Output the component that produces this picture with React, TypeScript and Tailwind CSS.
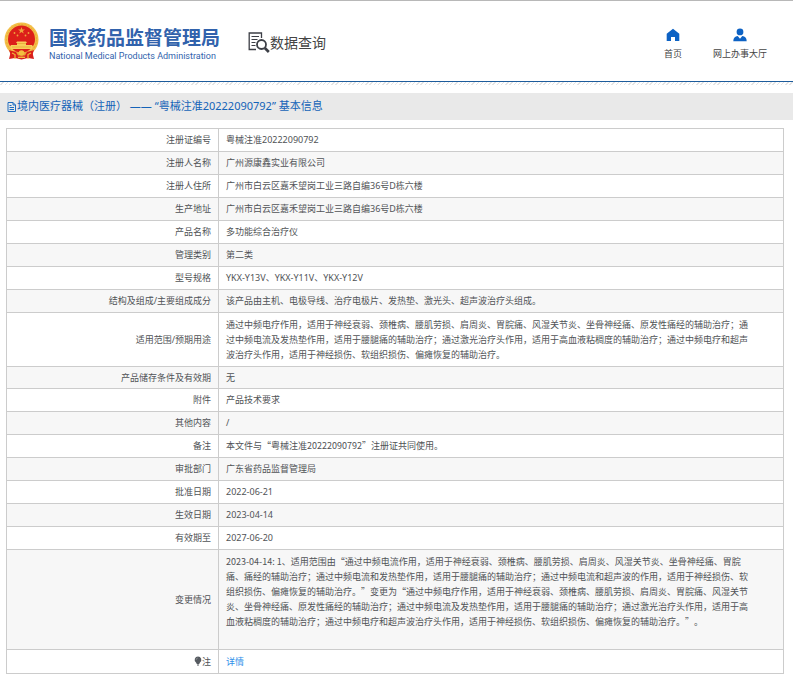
import React from 'react';
import clsx from 'clsx';

interface Row {
  label: string;
  value: string;
  height?: string;
}

const ROWS: Row[] = [
  { label: '注册证编号', value: '粤械注准20222090792' },
  { label: '注册人名称', value: '广州源康鑫实业有限公司' },
  { label: '注册人住所', value: '广州市白云区嘉禾望岗工业三路自编36号D栋六楼' },
  { label: '生产地址', value: '广州市白云区嘉禾望岗工业三路自编36号D栋六楼' },
  { label: '产品名称', value: '多功能综合治疗仪' },
  { label: '管理类别', value: '第二类' },
  { label: '型号规格', value: 'YKX-Y13V、YKX-Y11V、YKX-Y12V' },
  {
    label: '结构及组成/主要组成成分',
    value: '该产品由主机、电极导线、治疗电极片、发热垫、激光头、超声波治疗头组成。',
  },
  {
    label: '适用范围/预期用途',
    value:
      '通过中频电疗作用，适用于神经衰弱、颈椎病、腰肌劳损、肩周炎、胃脘痛、风湿关节炎、坐骨神经痛、原发性痛经的辅助治疗；通过中频电流及发热垫作用，适用于腰腿痛的辅助治疗；通过激光治疗头作用，适用于高血液粘稠度的辅助治疗；通过中频电疗和超声波治疗头作用，适用于神经损伤、软组织损伤、偏瘫恢复的辅助治疗。',
    height: 'h-[54px]',
  },
  { label: '产品储存条件及有效期', value: '无', height: 'h-[22px]' },
  { label: '附件', value: '产品技术要求' },
  { label: '其他内容', value: '/' },
  { label: '备注', value: '本文件与“粤械注准20222090792”注册证共同使用。' },
  { label: '审批部门', value: '广东省药品监督管理局' },
  { label: '批准日期', value: '2022-06-21' },
  { label: '生效日期', value: '2023-04-14' },
  { label: '有效期至', value: '2027-06-20' },
  {
    label: '变更情况',
    value:
      '2023-04-14: 1、适用范围由“通过中频电流作用，适用于神经衰弱、颈椎病、腰肌劳损、肩周炎、风湿关节炎、坐骨神经痛、胃脘痛、痛经的辅助治疗；通过中频电流和发热垫作用，适用于腰腿痛的辅助治疗；通过中频电流和超声波的作用，适用于神经损伤、软组织损伤、偏瘫恢复的辅助治疗。”变更为“通过中频电疗作用，适用于神经衰弱、颈椎病、腰肌劳损、肩周炎、胃脘痛、风湿关节炎、坐骨神经痛、原发性痛经的辅助治疗；通过中频电流及发热垫作用，适用于腰腿痛的辅助治疗；通过激光治疗头作用，适用于高血液粘稠度的辅助治疗；通过中频电疗和超声波治疗头作用，适用于神经损伤、软组织损伤、偏瘫恢复的辅助治疗。”。',
    height: 'h-[100px]',
  },
];

const CELL = 'border border-[#ccc] px-[7px] pt-0 pb-[1px]';

// Gives curly quotes their full-width form
const CN_QUOTES =
  "font-['Noto_Sans_CJK_SC',sans-serif] [text-spacing-trim:space-all]";

function Emblem() {
  return (
    <svg width="35" height="38" viewBox="0 0 35 38" aria-hidden="true">
      <path d="M7 29h21l2 8-6-1-6.500 1.500L11 36l-6 1z" fill="#d8201c" />
      <circle cx="17.500" cy="17.500" r="17" fill="#f3bf48" />
      <circle
        cx="17.500"
        cy="17.500"
        r="15"
        fill="none"
        stroke="#e8ab38"
        strokeWidth="1"
        strokeDasharray="2 1.500"
      />
      <circle cx="17.500" cy="17" r="13.500" fill="#dc1f1a" />
      <path
        d="M17.500 5l.9 2.400h2.600l-2.100 1.600.8 2.500-2.200-1.500-2.200 1.500.8-2.500L14 7.400h2.600z"
        fill="#f0a43c"
      />
      <g fill="#f0a43c">
        <circle cx="10.500" cy="11" r="0.900" />
        <circle cx="13.500" cy="13.500" r="0.900" />
        <circle cx="21.500" cy="13.500" r="0.900" />
        <circle cx="24.500" cy="11" r="0.900" />
      </g>
      <path
        d="M13 19.500h9l1 1.500h-1v2h6l1 1.500-1 2.500H7l-1-2.500L7 23h6v-2h-1z"
        fill="#f7cf5a"
      />
      <path d="M8 25h19M13 21.500h9" stroke="#e39a2c" strokeWidth="0.600" />
      <path d="M5 28c5 2.500 20 2.500 25 0l-2 6H7z" fill="#dc1f1a" />
      <path d="M12 30h11l-2 3.500h-7z" fill="#e9a038" />
      <circle cx="17.500" cy="31" r="2.800" fill="#f3bf3f" />
      <path
        d="M8 31l3 1.500V37M27 31l-3 1.500V37M14 35.500h7"
        stroke="#f0b93a"
        strokeWidth="1.200"
        fill="none"
      />
    </svg>
  );
}

function SearchDocIcon() {
  return (
    <svg
      width="22"
      height="21"
      viewBox="0 0 22 21"
      fill="none"
      stroke="#3c3f46"
      aria-hidden="true"
    >
      <path d="M13.500 6V1H1.200v16.500H8" strokeWidth="1.300" />
      <path
        d="M3.500 4.500h7.500M3.500 7.500h6M3.500 10.500h4M3.500 13.500h4"
        strokeWidth="1.200"
      />
      <circle cx="13.500" cy="12.500" r="4.500" strokeWidth="1.800" />
      <path d="M16.800 16l4 4" strokeWidth="2.600" />
    </svg>
  );
}

function HomeIcon() {
  return (
    <svg width="14" height="14" viewBox="0 0 14 14" fill="#0d62c4" aria-hidden="true">
      <path d="M7 .8L.7 5.800V13h4.300V9h4v4h4.300V5.800z" />
    </svg>
  );
}

function UserIcon() {
  return (
    <svg width="14" height="14" viewBox="0 0 14 14" fill="#0d62c4" aria-hidden="true">
      <circle cx="7" cy="3.900" r="3.400" />
      <path d="M.3 13.200c0-3.200 1.700-4.800 4.400-5.200L7 10.800 9.300 8c2.700.4 4.400 2 4.400 5.200z" />
    </svg>
  );
}

function DocIcon() {
  return (
    <svg
      width="10"
      height="12"
      viewBox="0 0 10 12"
      fill="none"
      stroke="#1f6cc0"
      aria-hidden="true"
    >
      <path d="M1 1.500h5l2.500 2.500v6.500H1zM6 1.500V4h2.500M2.500 4.500h2M2.500 6.500h4.500M2.500 8.500h4.500" />
    </svg>
  );
}

function BulbIcon() {
  return (
    <svg width="8" height="10" viewBox="0 0 8 10" fill="#555a60" aria-hidden="true">
      <path d="M4 .5a3.400 3.400 0 0 1 2 6.100L5.200 8H2.800L2 6.600A3.400 3.400 0 0 1 4 .5z" />
      <path d="M3 8.500h2v1H3z" />
      <path d="M2.200 3.800A1.800 1.800 0 0 1 3.800 2" fill="none" stroke="#aaa" strokeWidth="0.600" />
    </svg>
  );
}

const NAV_LIST = [
  { name: '首页', Icon: HomeIcon },
  { name: '网上办事大厅', Icon: UserIcon },
];

function Header() {
  return (
    <header className="flex items-center justify-between h-[82px] pl-[4px] pr-[26px] border-t border-t-[#b8b8b8] border-b border-b-[#1d5c9c]">
      <div className="flex items-center">
        <a href="#" className="flex items-center gap-[10px] text-[#3162ac]">
          <Emblem />
          <span className="flex flex-col pt-[6px]">
            <span className="text-[19px] leading-[24px] font-bold">
              国家药品监督管理局
            </span>
            <span className="font-[Roboto,sans-serif] text-[9px] leading-[12px]">
              National Medical Products Administration
            </span>
          </span>
        </a>
        <a
          href="#"
          className="flex items-center ml-[28px] pt-[2px] text-[14px] text-[#444]"
        >
          <SearchDocIcon />
          数据查询
        </a>
      </div>
      <nav>
        <ul className="flex gap-[31px] pt-[7px]">
          {NAV_LIST.map(({ name, Icon }) => (
            <li key={name}>
              <a
                href="#"
                className="flex flex-col items-center gap-[4px] text-[9px] leading-[15px] text-[#444]"
              >
                <Icon />
                {name}
              </a>
            </li>
          ))}
        </ul>
      </nav>
    </header>
  );
}

function App() {
  return (
    <div className="bg-white font-['Noto_Sans','Noto_Sans_CJK_SC',sans-serif] pb-[7px]">
      <Header />
      <div className="h-[3px] bg-[repeating-linear-gradient(135deg,#fff_0px,#fff_2px,#e4e4e4_2px,#e4e4e4_3px)]"></div>
      <main>
        <h1 className="flex items-center h-[27px] mt-[8px] pl-[7px] bg-[#e9e9e9] text-[11px] text-[#1463b8]">
          <DocIcon />
          境内医疗器械（注册） —— “粤械注准20222090792” 基本信息
        </h1>
        <div className="pt-[8px] pl-[6px] pr-[9px]">
          <table className="w-full border-collapse table-fixed text-[9px] leading-[15px] text-[#505356]">
            <colgroup>
              <col className="w-[212px]" />
              <col />
            </colgroup>
            <tbody>
              {ROWS.map(({ label, value, height }) => (
                <tr
                  key={label}
                  className={clsx('even:bg-[#f7f7f7]', height || 'h-[23px]')}
                >
                  <th scope="row" className={clsx(CELL, 'text-right font-normal')}>
                    {label}
                  </th>
                  <td
                    className={clsx(
                      CELL,
                      value.includes('“') && CN_QUOTES,
                      label === '变更情况' && 'pt-[4px] align-top',
                    )}
                  >
                    <div className="pr-[20px]">{value}</div>
                  </td>
                </tr>
              ))}
              <tr className="h-[24px]">
                <th scope="row" className={clsx(CELL, 'font-normal')}>
                  <span className="flex items-center justify-end">
                    <BulbIcon />注
                  </span>
                </th>
                <td className={CELL}>
                  <a href="#" className="text-[#2f8fea]">
                    详情
                  </a>
                </td>
              </tr>
            </tbody>
          </table>
        </div>
      </main>
    </div>
  );
}

export default App;
